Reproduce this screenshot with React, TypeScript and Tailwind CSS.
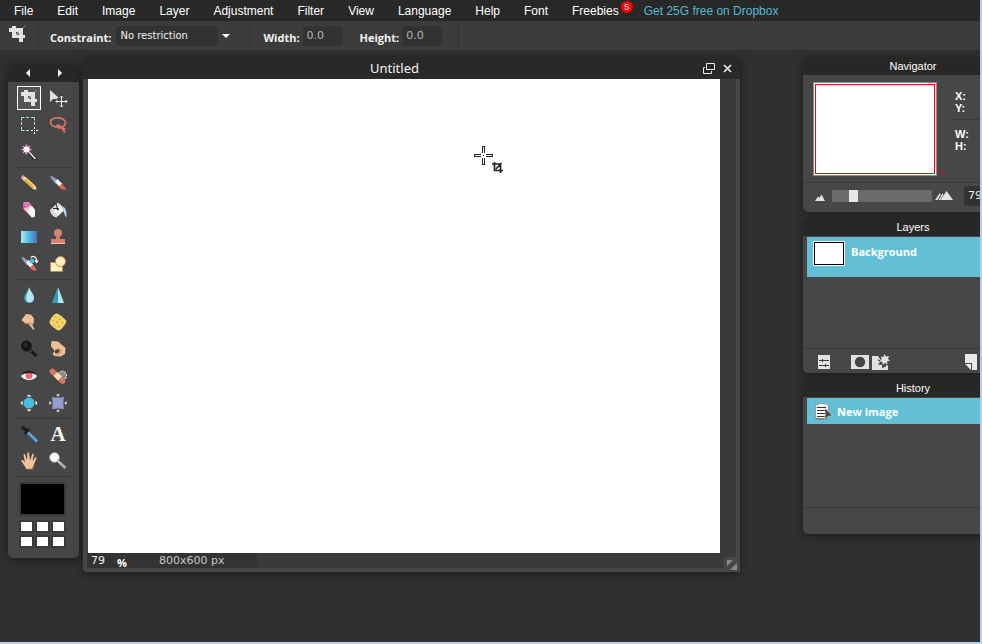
import type { ReactNode } from "react";

const menus = ["File", "Edit", "Image", "Layer", "Adjustment", "Filter", "View", "Language", "Help", "Font"];

function CropShape() {
  return (
    <>
      <path d="M20 4 10 14" stroke="#8d8d8d" strokeWidth="1" />
      <path d="M4 6h14v14h-4v-4H7v-3h7v-3H4z" fill="#e2e2e2" fillRule="evenodd" />
      <path d="M7 4h4v9H7z" fill="#e2e2e2" />
      <path d="M17 13h3v3h-3z" fill="#e2e2e2" />
      <path d="M11 10h3v3h-3z" fill="#5b5b5b" />
      <path d="M14.5 9.500 11 13" stroke="#c4c4c4" strokeWidth="1" />
    </>
  );
}

function Svg({ children }: { children: ReactNode }) {
  return (
    <svg viewBox="0 0 24 24" fill="none" className="size-full" aria-hidden="true">
      {children}
    </svg>
  );
}

const brush = (
  <>
    <path d="M4.500 5c2-.5 7 3.500 8.500 6l-2.500 2.500C8 11 4.500 7.500 4.500 5z" fill="#8f9cc9" />
    <path d="m9 10.500 2.500-2.500 5 5-3 3z" fill="#f2f2f2" />
    <path d="M13 15.500 15.500 13c2.500.5 2.500 4 5 5-2.500 1.500-6.500.5-7.500-2.500z" fill="#d9695c" />
  </>
);

type Tool = { name: string; icon: ReactNode };

const groups: (Tool | null)[][] = [
  [
    { name: "Crop", icon: <CropShape /> },
    {
      name: "Move",
      icon: (
        <>
          <path d="M4 4v12l3-3h3.500l2-1.500z" fill="#dedede" />
          <path
            d="M15.500 10v11M10 15.500h11M14 11.500l1.500-1.500 1.500 1.500M14 19.500l1.500 1.500 1.500-1.500M11.500 14 10 15.500l1.500 1.500M19.500 14l1.500 1.500-1.500 1.500"
            stroke="#f4f4f4"
          />
        </>
      ),
    },
    {
      name: "Marquee",
      icon: (
        <>
          <path d="M4.500 7.500v-3h3M9 4.500h3M14 4.500h3.500v3M17.500 9v3M4.500 9v3M4.500 14v3.500h3M9 17.500h3" stroke="#a5dfe9" />
          <path d="M17.500 14v7M14 17.500h7" stroke="#303030" />
          <path d="M17.500 14v2M17.500 17v1M17.500 19v2M14 17.500h2M19 17.500h2" stroke="#fff" />
        </>
      ),
    },
    {
      name: "Lasso",
      icon: (
        <path
          d="M15 13.500C9 15 4.500 12.500 4.500 9.500 4.500 6 8 4.800 11.500 4.800c4 0 8 2 8 5s-3.500 5-6.500 5c-2.500 0-3-2.800-1-2.800 3 0 4 3.500 7 7.500M16 15l3.500.8"
          stroke="#da7466"
          strokeWidth="1.700"
        />
      ),
    },
    {
      name: "Wand",
      icon: (
        <>
          <path d="M10.500 11 19 20" stroke="#222" strokeWidth="3" />
          <path d="m11.500 11.500 7 7.500" stroke="#f0f0f0" strokeWidth="1.500" />
          <path d="M9.500 4.500v10M4.500 9.500h10M6 6l7 7M13 6l-7 7" stroke="#e08fc8" strokeWidth="1.600" />
          <circle cx="9.500" cy="9.500" r="3" fill="#fff" />
        </>
      ),
    },
    null,
  ],
  [
    {
      name: "Pencil",
      icon: (
        <>
          <path d="m6 4.500-2 2.500 12 11 3.500 1-.5-3.500z" fill="#efd9a0" />
          <path d="m8.500 6-2.500 3 9.500 8.500 2.500-3z" fill="#e6a936" />
          <path d="m8.500 6-1 1.200 9.500 8.600 1-1.300z" fill="#f6cf6c" />
          <path d="m6 4-2 2.500 2.500 2 2-2.300z" fill="#efa4b6" />
          <path d="m7.800 6.200-1.800 2 1 1L9 7z" fill="#eee" />
        </>
      ),
    },
    { name: "Brush", icon: brush },
    {
      name: "Eraser",
      icon: (
        <>
          <path d="m6.500 4.500 5-.5L18 12v6.500l-3 1L6.500 11z" fill="#f8bfd0" />
          <path d="m6.500 4.500 2.500 5-2.500 1.500z" fill="#d9559e" />
          <path d="m6.500 4.500 5-.5L14 7.500l-4.500 2.500z" fill="#e673b4" />
          <path d="m12.500 9.500 2.500-1.500 3 4v6.500l-3 1-4-4.500z" fill="#fafafa" />
        </>
      ),
    },
    {
      name: "Paint bucket",
      icon: (
        <>
          <path d="m4 12 8-7.500 7 6.500-8.500 8.500c-3 0-6.500-4-6.500-7.500z" fill="#d9d9d9" />
          <path d="m8 13 6-6 5 4-7 7z" fill="#f7f7f7" />
          <path d="M5.500 9C5.500 5 9 4 10 6l1.500 4.500" stroke="#333" />
          <path d="M7 10.500h4" stroke="#333" />
          <circle cx="11.800" cy="11" r="1.200" fill="#222" />
          <path d="M15 8.500c4 0 6 3 5.500 11-1.500-1-2.500-5-3.500-7z" fill="#a9d8ef" />
        </>
      ),
    },
    {
      name: "Gradient",
      icon: (
        <>
          <linearGradient id="blueRamp">
            <stop stopColor="#b5e6f3" />
            <stop offset=".5" stopColor="#48bde0" />
            <stop offset="1" stopColor="#5a6db4" />
          </linearGradient>
          <path d="M4 6h16v12H4z" fill="url(#blueRamp)" />
        </>
      ),
    },
    {
      name: "Clone stamp",
      icon: (
        <>
          <circle cx="12" cy="8" r="4" fill="#d88172" />
          <path d="M10.500 10h3l.5 4h5v4H5v-4h5z" fill="#d88172" />
          <path d="M5 18.500h14" stroke="#f0c2bb" />
        </>
      ),
    },
    {
      name: "History brush",
      icon: (
        <>
          {brush}
          <path d="M14 6c1-2.500 5-2 5.500 2v2M18 8.500l1.500 2 1.500-2" stroke="#f4f4f4" strokeWidth="1.300" />
          <path d="M13 7h4v4h-4z" fill="#3fc2e4" />
        </>
      ),
    },
    {
      name: "Shapes",
      icon: (
        <>
          <path d="M4.500 10.500h12v9h-12z" fill="#fcf0bc" stroke="#b98a55" />
          <circle cx="14.500" cy="9.500" r="5" fill="#fcf0bc" stroke="#b98a55" />
        </>
      ),
    },
  ],
  [
    {
      name: "Blur",
      icon: (
        <>
          <path d="M12 4c1 4 5 7 5 11a5 5 0 0 1-10 0c0-4 4.500-7 5-11z" fill="#359cc0" />
          <path d="M12 4c1 4 5 7 5 11 0 3-2 4.500-4 4.500-3 0-4-2-4-4.500 0-4 3-7 3-11z" fill="#b4e5f7" />
        </>
      ),
    },
    {
      name: "Sharpen",
      icon: (
        <>
          <path d="M12 4 6 20h6z" fill="#369bc2" />
          <path d="m12 4 6 16h-6z" fill="#b4e5f7" />
        </>
      ),
    },
    {
      name: "Smudge",
      icon: (
        <>
          <path d="m9 4 5 .5 3 4-.5 5.500-1.500.5 2.500 4.500-1.500.8-5-6.300-2.500.5-4-4z" fill="#f0be94" />
          <path d="m4.500 10 4 3.500 2.500-.5 5 6.500M12 12l3 2.500" stroke="#b67c4e" strokeWidth=".8" />
        </>
      ),
    },
    {
      name: "Sponge",
      icon: (
        <>
          <path d="M10 3.500c2-.5 8.500 4.500 10.500 7.500 0 2-5 9-7.500 9.500-3-.5-8.500-5-9.500-8C3.500 9.500 8 4 10 3.500z" fill="#f4d76c" />
          <g fill="#e6ab3c">
            <circle cx="10" cy="7" r="1.100" />
            <circle cx="14" cy="9" r="1.200" />
            <circle cx="7" cy="10.500" r="1" />
            <circle cx="11" cy="12" r="1.300" />
            <circle cx="16.500" cy="12.500" r="1" />
            <circle cx="8.500" cy="15" r="1" />
            <circle cx="13" cy="16.500" r="1.200" />
          </g>
        </>
      ),
    },
    {
      name: "Dodge",
      icon: (
        <>
          <path d="m12 12 7.500 7" stroke="#151515" strokeWidth="2.600" />
          <path d="m13 13 1.500 1.500" stroke="#8a8a8a" />
          <circle cx="9.500" cy="9" r="5.400" fill="#151515" />
          <circle cx="8.500" cy="8" r="2.500" fill="#262626" />
        </>
      ),
    },
    {
      name: "Burn",
      icon: (
        <>
          <path d="M5.500 4 12 4.500l7.500 6.500-.5 6-4.500 2.500-6-.5-2-2 2-3L5 9z" fill="#efc093" />
          <path d="M8.500 14.500c1-2.500 4-3 5.500-1.500l-1.500 3-3 .5z" fill="#474747" />
          <path d="m8.500 14 2-2h3l2 2-2 3-4 .5" stroke="#b67c4e" strokeWidth=".8" />
        </>
      ),
    },
    {
      name: "Red eye",
      icon: (
        <>
          <path d="M4 12c3-5 13-5 16 0-3 5.500-13 5.500-16 0z" fill="#fff" />
          <circle cx="12" cy="11.500" r="3.600" fill="#f2647c" />
          <path d="M4 11.500c2-6.500 14-6.500 16 0-4-3.500-12-3.500-16 0z" fill="#2b2024" />
        </>
      ),
    },
    {
      name: "Spot heal",
      icon: (
        <>
          <path d="M13 9c3-4 8-1 7.500 3s-3 5.500-5 5" fill="#8b8b8b" stroke="#eee" strokeDasharray="2 1" />
          <path d="m6.500 7.500 10 9.500" stroke="#d27669" strokeWidth="5.500" strokeLinecap="round" />
          <path d="m9.500 10 4.500 4.500" stroke="#f6dcae" strokeWidth="5.500" />
        </>
      ),
    },
    {
      name: "Bloat",
      icon: (
        <>
          <circle cx="12" cy="12" r="5.500" fill="#45bfe0" />
          <path d="m12 3.500 2.500 2h-5zM12 20.500l2.500-2h-5zM3.500 12l2-2.500v5zM20.500 12l-2-2.500v5z" fill="#fff" />
        </>
      ),
    },
    {
      name: "Pinch",
      icon: (
        <>
          <path d="M6 6c4 .8 8 .8 12 0-.8 4-.8 8 0 12-4-.8-8-.8-12 0 .8-4 .8-8 0-12z" fill="#959dcc" />
          <path d="m12 5.500 2-2h-4zM12 18.500l2 2h-4zM5.500 12l-2-2v4zM18.500 12l2-2v4z" fill="#fff" />
        </>
      ),
    },
  ],
  [
    {
      name: "Color picker",
      icon: (
        <>
          <path d="m10 10 8 7.500 2 2" stroke="#62afe6" strokeWidth="3" />
          <path d="m10 11 8 7.500" stroke="#3478b0" />
          <path d="m4 4 3 .5 3 2.500 1.500-1L13 8l-4.500 5-1.500-1.500 1-2-3.500-3z" fill="#1c1c1c" />
        </>
      ),
    },
    {
      name: "Type",
      icon: null,
    },
    {
      name: "Hand",
      icon: (
        <>
          <path
            d="M4 11.500 6 11l2 3-1.500-8.500 1.500-.5 2 6.500.5-8h1.500l1 8L15.500 4.500l1.300.5-1.300 7.500 3-4.500 1.200.8-3.200 7.700-1 3.500h-6z"
            fill="#f3c39b"
          />
          <path d="M8 12.500 9.500 11l6 .5 1 2-1.500 6H9.500L7 15z" fill="#f3c39b" />
          <path d="M9.500 20h6l1-3.500" stroke="#b98057" strokeWidth=".8" />
        </>
      ),
    },
    {
      name: "Zoom",
      icon: (
        <>
          <path d="m12 12 2.500 2.500" stroke="#ddd" strokeWidth="2" />
          <path d="m14 14 5.500 5" stroke="#ababab" strokeWidth="3" />
          <circle cx="8.500" cy="8.500" r="4.700" fill="#f4f8fa" stroke="#d0d0d0" strokeWidth=".8" />
        </>
      ),
    },
  ],
];

function Toolbox() {
  return (
    <nav aria-label="Tools" className="shrink-0 mt-[14px] w-[71px] rounded-[5px] bg-[#474747] pb-[10px] shadow-[0_2px_8px_rgba(0,0,0,0.4)]">
      <div className="flex h-[18px] items-center justify-center gap-[26px] rounded-t-[5px] bg-[#272725]">
        <button aria-label="Collapse left">
          <svg width="6" height="8" viewBox="0 0 6 8"><path d="M5 0v8L1 4z" fill="#fff" /></svg>
        </button>
        <button aria-label="Collapse right">
          <svg width="6" height="8" viewBox="0 0 6 8"><path d="M1 0v8l4-4z" fill="#fff" /></svg>
        </button>
      </div>
      <div className="px-[7px] pt-1">
        {groups.map((group, g) => (
          <div key={g}>
            <div className="grid grid-cols-[28px_28px] justify-items-center gap-x-px gap-y-[3px]">
              {group.map((tool) =>
                tool ? (
                  <button
                    key={tool.name}
                    aria-label={tool.name}
                    className={
                      tool.name === "Crop"
                        ? "size-6 bg-[#555] outline outline-1 -outline-offset-1 outline-white"
                        : "size-6"
                    }
                  >
                    {tool.icon ? (
                      <Svg>{tool.icon}</Svg>
                    ) : (
                      <span className="block font-['Liberation_Serif',serif] text-[21px] leading-6 font-bold text-[#f4f4f4]">A</span>
                    )}
                  </button>
                ) : (
                  <span key="empty" />
                ),
              )}
            </div>
            <div className="mx-px my-[3px] h-px bg-[#3a3a3a]" />
          </div>
        ))}
        <div className="mt-[5px] px-1">
          <button aria-label="Foreground color" className="block h-[34px] w-[47px] rounded-[2px] border-2 border-[#3a3a3a] bg-black" />
          <div className="mt-1 grid w-[47px] grid-cols-3 gap-x-px gap-y-[2px]">
            {[1, 2, 3, 4, 5, 6].map((n) => (
              <button key={n} aria-label={`Swatch ${n}`} className="h-[13px] rounded-[2px] border-2 border-[#3a3a3a] bg-white" />
            ))}
          </div>
        </div>
      </div>
    </nav>
  );
}

function OptionField({ id, label }: { id: string; label: string }) {
  return (
    <div className="flex items-center gap-[3px]">
      <label htmlFor={id} className="pt-[5px] font-['Open_Sans',sans-serif] text-[11px] font-bold text-[#f2f2f2]">
        {label}
      </label>
      <input
        id={id}
        defaultValue="0.0"
        className="h-5 w-10 rounded-[3px] bg-[#323232] px-1 font-['DejaVu_Sans',sans-serif] text-[11px] text-[#b4b4b4] outline-none"
      />
    </div>
  );
}

function DocumentWindow() {
  return (
    <section className="min-w-0 flex-1 mt-[7px] rounded-t-[5px] rounded-bl-[4px] bg-[#474747] pb-1 shadow-[0_2px_8px_rgba(0,0,0,0.4)]">
      <header className="grid h-[22px] grid-cols-[1fr_auto_1fr] items-center rounded-t-[5px] bg-[#292929] px-2">
        <span />
        <h1 className="pt-px pr-[34px] font-['Noto_Sans',sans-serif] text-[13px] text-[#f4f4f4]">Untitled</h1>
        <div className="flex items-center justify-end gap-2">
          <button aria-label="Restore">
            <svg width="12" height="11" viewBox="0 0 12 11" fill="none" stroke="#e8e8e8">
              <path d="M3.500.5h8v6h-8zM2 4.500H.5v6h8V8" />
            </svg>
          </button>
          <button aria-label="Close">
            <svg width="9" height="9" viewBox="0 0 9 9" fill="none" stroke="#f0f0f0" strokeWidth="1.600">
              <path d="m1 1 7 7M8 1 1 8" />
            </svg>
          </button>
        </div>
      </header>
      <div className="mr-1 ml-[5px] bg-[#3a3a3a] pr-4">
        <div className="relative aspect-[4/3] w-full bg-white">
          <svg className="absolute top-[67px] left-[386px]" width="30" height="28" viewBox="0 0 30 28" fill="none">
            <path d="M9.500 0v7M9.500 12v7M0 9.500h7M12 9.500h7" stroke="#222" strokeWidth="3" />
            <path d="M9.500 1v6M9.500 12v6M1 9.500h6M12 9.500h6" stroke="#fff" />
            <path d="M9 9h1v1H9z" fill="#222" />
            <path d="M18 18h8.500v9M20.500 16v8.500H29M27.500 17l-5.500 6" stroke="#222" strokeWidth="1.700" />
          </svg>
        </div>
      </div>
      <footer className="mr-1 ml-1 flex h-[15px] items-stretch bg-[#3a3a3a] font-['DejaVu_Sans',sans-serif] text-[11px]">
        <div className="flex w-[170px] items-center bg-[#333] pt-[2px] pl-1">
          <input aria-label="Zoom percent" id="zoom" defaultValue="79" className="w-[26px] text-[#f0f0f0] outline-none" />
          <label htmlFor="zoom" className="pt-1 font-['Open_Sans',sans-serif] text-[11px] font-bold text-white">%</label>
          <span className="ml-8 text-[#c6c6c6]">800x600 px</span>
        </div>
        <button aria-label="Resize" className="-mr-1 mt-1 ml-auto w-4 bg-[#474747] pt-[3px] pl-[3px]">
          <svg width="10" height="10" viewBox="0 0 10 10" fill="#8a8a8a">
            <path d="M0 0h6L0 6zM10 3v7H3z" />
          </svg>
        </button>
      </footer>
    </section>
  );
}

function Panel({ title, children }: { title: string; children: ReactNode }) {
  return (
    <section className="flex h-[155px] w-[220px] flex-col rounded-[5px] bg-[#474747] shadow-[0_2px_8px_rgba(0,0,0,0.4)]">
      <h2 className="h-[18px] shrink-0 rounded-t-[5px] bg-[#272725] text-center text-[11px] leading-[18px] text-white">{title}</h2>
      {children}
    </section>
  );
}

function SidePanels() {
  return (
    <aside className="flex w-[177px] shrink-0 flex-col gap-[6px] pt-[7px]">
      <Panel title="Navigator">
        <div className="flex flex-1 border-b border-[#3a3a3a] pt-[7px] pl-[10px]">
          <div className="h-[94px] w-[124px] border border-[#8d8d8d] bg-white p-px">
            <div className="h-full border border-[#f00]" />
          </div>
          <div className="ml-4 flex-1 text-[11px] leading-3 font-bold text-white">
            <div className="border-b border-[#3a3a3a] pt-2 pb-[5px] pl-[2px]"><p>X:</p><p>Y:</p></div>
            <div className="pt-2 pl-[2px]"><p>W:</p><p>H:</p></div>
          </div>
        </div>
        <div className="flex h-[29px] shrink-0 items-center pb-1 pl-3">
          <svg width="10" height="7" viewBox="0 0 10 7" className="mt-1" fill="#e2e2e2"><path d="m0 7 3-4.500 1.500 1.500L2.500 7zM2.500 7l4-6.500L10 7z" /></svg>
          <input
            type="range"
            aria-label="Navigator zoom"
            min="0"
            max="100"
            defaultValue="19"
            className="ml-[7px] h-3 w-[100px] appearance-none rounded-[2px] bg-[#6b6b6b] [&::-webkit-slider-thumb]:h-3 [&::-webkit-slider-thumb]:w-[9px] [&::-webkit-slider-thumb]:appearance-none [&::-webkit-slider-thumb]:bg-[#e6e6e6]"
          />
          <svg width="18" height="9" viewBox="0 0 18 9" className="ml-[3px]" fill="#e2e2e2"><path d="m0 9 4.500-6.500L6 3 2.500 9zM3.500 9 7.500 2.500 8.500 3.500 5 9zM5.500 9l6-9L18 9z" /></svg>
          <input
            aria-label="Zoom value"
            defaultValue="79"
            className="ml-[11px] h-5 w-10 rounded-[3px] bg-[#323232] px-1 font-['DejaVu_Sans',sans-serif] text-[11px] text-[#f0f0f0] outline-none"
          />
        </div>
      </Panel>

      <Panel title="Layers">
        <div className="flex-1 border-b border-[#3a3a3a] pt-px pl-1">
          <button className="flex h-10 w-full items-start gap-[6px] bg-[#63bfd6] pt-1 pl-[6px] text-left">
            <span className="h-[25px] w-8 border border-white">
              <span className="block h-full border border-black bg-white" />
            </span>
            <span className="pt-[3px] font-['Open_Sans',sans-serif] text-[11px] leading-[15px] font-bold text-white">Background</span>
          </button>
        </div>
        <div className="flex h-6 shrink-0 items-center pt-px pl-[15px]">
          <button aria-label="Layer settings">
            <svg width="12" height="14" viewBox="0 0 12 14">
              <path d="M0 0h12v14H0z" fill="#e2e2e2" />
              <path d="M1 5.500h10M1 10.500h10M4.500 4v3M7.500 9v3" stroke="#3a3a3a" />
            </svg>
          </button>
          <button aria-label="Add mask" className="ml-[21px]">
            <svg width="18" height="14" viewBox="0 0 18 14">
              <path d="M0 0h18v14H0z" fill="#e2e2e2" />
              <circle cx="9" cy="7" r="5.200" fill="#444" />
            </svg>
          </button>
          <button aria-label="Layer styles" className="ml-[3px]">
            <svg width="18" height="16" viewBox="0 0 18 16">
              <path d="M0 2h6l2 3h8v11H0z" fill="#e2e2e2" />
              <path d="m5 5.500 3.500.5L9 2l9-1v10h-2v5l-3-3.500-3 2V11l-4-.5 2-2.500z" fill="#474747" />
              <path d="m12.500 0 1.300 2.500L17 2l-1 3 2 1.500-3 1 .5 3-2.500-1.500L10.500 11V8L7 7.500l2.500-1.800L9 2.500l2.500.5z" fill="#e2e2e2" />
              <path d="M14 10.500 16 12v4h-2z" fill="#e2e2e2" />
            </svg>
          </button>
          <button aria-label="New layer" className="ml-[75px]">
            <svg width="12" height="16" viewBox="0 0 12 16">
              <path d="M0 0h12v16H7V9H0z" fill="#e8e8e8" />
              <path d="M0 10h6v6z" fill="#e8e8e8" />
            </svg>
          </button>
        </div>
      </Panel>

      <Panel title="History">
        <div className="flex-1 border-b border-[#3a3a3a] pt-px pl-1">
          <button className="flex h-[26px] w-full items-center gap-1 bg-[#63bfd6] pl-2 text-left">
            <svg width="18" height="17" viewBox="0 0 18 17" fill="none">
              <path d="M.5 1.500h3l1-1h6l1 1h2v14H.5z" fill="#f6f6f6" stroke="#9a9a9a" />
              <path d="M.5 16h12" stroke="#6d6d6d" />
              <path d="M2 4.500h9M2 7.500h9M2 10.500h9M2 13.500h9" stroke="#333" />
              <path d="M10 5v12l3-3.500 4.500-1z" fill="#4a4a4a" stroke="#ddd" strokeWidth=".6" />
            </svg>
            <span className="font-['Open_Sans',sans-serif] text-[11px] leading-[15px] font-bold text-white">New image</span>
          </button>
        </div>
        <div className="h-[26px] shrink-0" />
      </Panel>
    </aside>
  );
}

export default function App() {
  return (
    <div className="flex h-screen min-h-[560px] flex-col overflow-hidden border-r-2 border-b-2 border-[#b5cfe8] bg-[#303030] font-['Liberation_Sans',Arial,sans-serif] text-white">
      <nav aria-label="Main menu" className="flex h-[21px] shrink-0 items-center bg-[#282828] pl-[2px] text-xs">
        {menus.map((item) => (
          <button key={item} className="px-3">{item}</button>
        ))}
        <button className="relative pr-[25px] pl-3">
          Freebies
          <span className="absolute -top-[2px] right-[11px] size-3 rounded-full bg-[#f00] text-center text-[9px] leading-3">5</span>
        </button>
        <a href="#dropbox" className="text-[#55b9d0]">Get 25G free on Dropbox</a>
      </nav>

      <div className="flex h-[29px] shrink-0 items-center bg-[#3c3c3c]">
        <svg width="24" height="24" viewBox="0 0 24 24" fill="none" className="mb-[3px] ml-[5px]" aria-hidden="true"><CropShape /></svg>
        <div className="ml-[9px] h-6 w-px bg-[#323232]" />
        <div className="ml-[11px] flex items-center">
          <label htmlFor="constraint" className="pt-[5px] font-['Open_Sans',sans-serif] text-[11px] font-bold text-[#f2f2f2]">Constraint:</label>
          <select id="constraint" className="ml-[5px] h-5 w-[102px] appearance-none rounded-[3px] bg-[#323232] px-1 font-['DejaVu_Sans',sans-serif] text-[10px] text-[#f0f0f0] outline-none">
            <option>No restriction</option>
          </select>
          <svg width="8" height="4" viewBox="0 0 8 4" className="ml-1" aria-hidden="true"><path d="M0 0h8L4 4z" fill="#fff" /></svg>
        </div>
        <div className="ml-[19px] h-6 w-px bg-[#323232]" />
        <div className="ml-[13px] flex gap-[17px]">
          <OptionField id="crop-width" label="Width:" />
          <OptionField id="crop-height" label="Height:" />
        </div>
        <div className="ml-4 h-6 w-px bg-[#323232]" />
      </div>

      <main className="flex min-h-0 flex-1 items-start pl-2">
        <Toolbox />
        <div className="ml-1 mr-[63px] flex min-w-0 flex-1">
          <DocumentWindow />
        </div>
        <SidePanels />
      </main>
    </div>
  );
}
